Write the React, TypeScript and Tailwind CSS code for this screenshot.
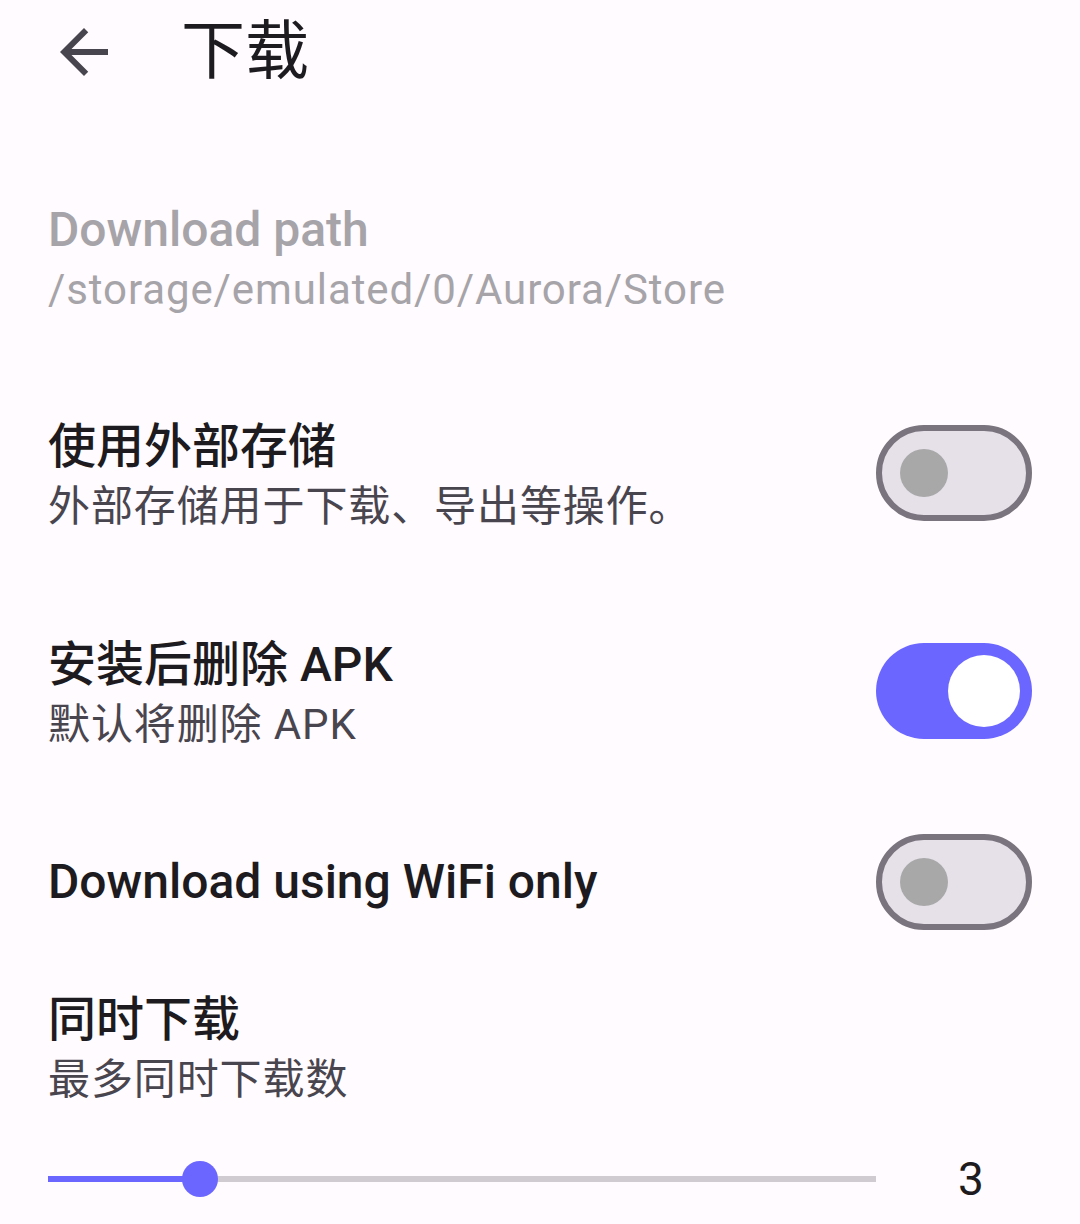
import React from "react";

const FONT = "font-['Roboto','Noto_Sans_CJK_SC',sans-serif]";

function Switch({ on, lift }: { on: boolean; lift?: boolean }) {
  const shift = lift ? "-translate-y-[4px]" : "";
  if (on) {
    return (
      <div className={`${shift} w-[156px] h-[96px] rounded-full bg-[#6b66ff] flex items-center justify-end pr-[12px] shrink-0`}>
        <div className="w-[72px] h-[72px] rounded-full bg-white" />
      </div>
    );
  }
  return (
    <div className={`${shift} w-[156px] h-[96px] rounded-full bg-[#e6e0e9] border-[6px] border-[#79747e] flex items-center pl-[18px] shrink-0`}>
      <div className="w-[48px] h-[48px] rounded-full bg-[#a8a8a8]" />
    </div>
  );
}

function TextBlock({ title, sub, disabled }: { title: string; sub?: string; disabled?: boolean }) {
  return (
    <div className="flex flex-col">
      <div className={`text-[48px] leading-[60px] font-medium ${disabled ? "text-[#a6a4a9]" : "text-[#1d1b20]"}`}>{title}</div>
      {sub && (
        <div className={`text-[42px] leading-[60px] tracking-[0.9px] ${disabled ? "text-[#a6a4a9]" : "text-[#49454f]"}`}>{sub}</div>
      )}
    </div>
  );
}

export default function App() {
  return (
    <div className={`w-[1080px] h-[1224px] bg-[#fffbfe] ${FONT} overflow-hidden flex flex-col`}>
      <div className="h-[104px] flex items-center">
        <div className="ml-[48px] w-[72px] h-[72px]">
          <svg viewBox="0 0 24 24" width="72" height="72" fill="#49454f">
            <path d="M20 11H7.83l5.59-5.59L12 4l-8 8 8 8 1.41-1.41L7.83 13H20v-2z" />
          </svg>
        </div>
        <div className="ml-[61px] text-[64px] leading-[80px] text-[#1d1b20]">下载</div>
      </div>

      <div className="mt-[96px] px-[48px]">
        <TextBlock title="Download path" sub="/storage/emulated/0/Aurora/Store" disabled />
      </div>

      <div className="mt-[97px] pl-[48px] pr-[48px] flex items-center justify-between">
        <TextBlock title="使用外部存储" sub="外部存储用于下载、导出等操作。" />
        <Switch on={false} lift />
      </div>

      <div className="mt-[98px] pl-[48px] pr-[48px] flex items-center justify-between">
        <TextBlock title="安装后删除 APK" sub="默认将删除 APK" />
        <Switch on={true} lift />
      </div>

      <div className="mt-[79px] pl-[48px] pr-[48px] flex items-center justify-between">
        <TextBlock title="Download using WiFi only" />
        <Switch on={false} />
      </div>

      <div className="mt-[60px] px-[48px]">
        <TextBlock title="同时下载" sub="最多同时下载数" />
      </div>

      <div className="mt-[45px] h-[48px] flex items-center pl-[48px]">
        <div className="relative w-[828px] h-[48px] flex items-center">
          <div className="h-[6px] w-[152px] bg-[#6b66ff]" />
          <div className="h-[6px] flex-1 bg-[#d0cbd1]" />
          <div className="absolute left-[134px] top-[6px] w-[36px] h-[36px] rounded-full bg-[#6b66ff]" />
        </div>
        <div className="ml-[82px] text-[46px] leading-[48px] text-[#1d1b20]">3</div>
      </div>
    </div>
  );
}
